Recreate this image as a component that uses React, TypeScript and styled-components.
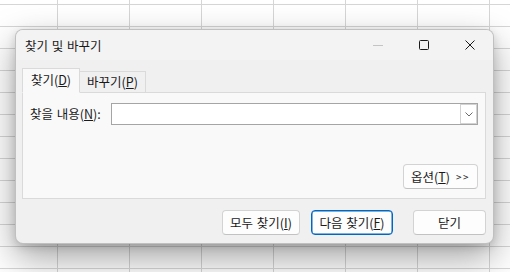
import React from "react";
import styled, { createGlobalStyle } from "styled-components";

const GlobalStyle = createGlobalStyle`
  html, body {
    margin: 0;
    padding: 0;
    background: #ffffff;
    overflow: hidden;
  }
  * {
    box-sizing: border-box;
  }
`;

const FONT = `"Noto Sans CJK KR", "Malgun Gothic", "Noto Sans", sans-serif`;

const Sheet = styled.div`
  width: 510px;
  height: 272px;
  overflow: hidden;
  padding: 29px 0 0 15px;
  background-color: #ffffff;
  background-image: linear-gradient(to right, #d6d6d6 1px, transparent 1px),
    linear-gradient(to bottom, #d6d6d6 1px, transparent 1px);
  background-size: 72px 22px;
  background-position: 57px 4px;
  font-family: ${FONT};
  font-size: 12.5px;
  word-spacing: 1px;
  color: #1a1a1a;
`;

const Dialog = styled.div`
  width: 479px;
  height: 215px;
  display: flex;
  flex-direction: column;
  background: #f0f0f0;
  border: 1px solid rgba(0, 0, 0, 0.2);
  border-radius: 8px;
  overflow: hidden;
  box-shadow: 0 14px 36px rgba(0, 0, 0, 0.36), 0 3px 10px rgba(0, 0, 0, 0.14);
`;

const TitleBar = styled.div`
  height: 30px;
  display: flex;
  align-items: center;
  background: #f3f3f3;
  padding-left: 9px;
`;

const Title = styled.div`
  flex: 1;
  line-height: 14px;
  padding-top: 1px;
`;

const CaptionButton = styled.div`
  width: 46px;
  height: 30px;
  display: flex;
  align-items: center;
  justify-content: center;
`;

const Body = styled.div`
  flex: 1;
  display: flex;
  flex-direction: column;
  padding: 8px 7px 0 6px;
`;

const TabRow = styled.div`
  display: flex;
  align-items: flex-end;
  height: 25px;
  margin-bottom: -1px;
  position: relative;
  z-index: 1;
`;

const Tab = styled.div<{ $active?: boolean }>`
  height: ${(p) => (p.$active ? "25px" : "22px")};
  display: flex;
  align-items: center;
  justify-content: center;
  padding: ${(p) => (p.$active ? "0 8px 1px 8px" : "0 7px")};
  background: ${(p) => (p.$active ? "#f9f9f9" : "#f0f0f0")};
  border: 1px solid #dadada;
  border-left-width: ${(p) => (p.$active ? "1px" : "0")};
  border-bottom-color: ${(p) => (p.$active ? "#f9f9f9" : "#dadada")};
  line-height: 14px;
`;

const Panel = styled.div`
  height: 107px;
  display: flex;
  flex-direction: column;
  background: #f9f9f9;
  border: 1px solid #dadada;
  padding: 10px 7px 9px 7px;
`;

const FieldRow = styled.div`
  display: flex;
  align-items: center;
`;

const Label = styled.label`
  width: 81px;
  line-height: 14px;
`;

const Combo = styled.div`
  flex: 1;
  height: 22px;
  display: flex;
  background: #ffffff;
  border: 1px solid #a5a5a5;
`;

const ComboInput = styled.input`
  flex: 1;
  min-width: 0;
  border: none;
  outline: none;
  background: transparent;
  font-family: ${FONT};
  font-size: 12px;
  padding: 0 4px;
`;

const DropButton = styled.div`
  width: 17px;
  height: 100%;
  display: flex;
  align-items: center;
  justify-content: center;
  border: 1px solid #d2d2d2;
  background: #ffffff;
`;

const Spacer = styled.div`
  flex: 1;
`;

const OptionsRow = styled.div`
  display: flex;
  justify-content: flex-end;
`;

const Footer = styled.div`
  display: flex;
  justify-content: flex-end;
  align-items: center;
  margin-top: 11px;
`;

const Button = styled.button<{ $width: number; $focused?: boolean; $gap?: number }>`
  width: ${(p) => p.$width}px;
  height: 25px;
  margin-left: ${(p) => p.$gap ?? 0}px;
  padding: 0;
  display: flex;
  align-items: center;
  justify-content: center;
  background: #fdfdfd;
  border: 1px solid ${(p) => (p.$focused ? "#0067c0" : "#d3d3d3")};
  border-bottom-color: ${(p) => (p.$focused ? "#0067c0" : "#c2c2c2")};
  box-shadow: ${(p) => (p.$focused ? "inset 0 0 0 0.5px #0067c0" : "none")};
  border-radius: 4px;
  font-family: ${FONT};
  font-size: 12.5px;
  word-spacing: 1px;
  line-height: 14px;
  color: #1a1a1a;
`;

const Key = styled.u`
  text-decoration: underline;
  text-underline-offset: 1px;
`;

const Arrows = styled.span`
  margin-left: 6px;
  font-size: 10px;
  letter-spacing: 1.5px;
`;

function MinimizeIcon() {
  return (
    <svg width="10" height="10" viewBox="0 0 10 10">
      <path d="M0 5.5 H10" stroke="#c4c4c4" strokeWidth="1" />
    </svg>
  );
}

function MaximizeIcon() {
  return (
    <svg width="10" height="10" viewBox="0 0 10 10">
      <rect x="0.5" y="0.5" width="9" height="9" rx="1" fill="none" stroke="#1a1a1a" strokeWidth="1" />
    </svg>
  );
}

function CloseIcon() {
  return (
    <svg width="10" height="10" viewBox="0 0 10 10">
      <path d="M0.5 0.5 L9.5 9.5 M9.5 0.5 L0.5 9.5" stroke="#1a1a1a" strokeWidth="1" />
    </svg>
  );
}

function ChevronIcon() {
  return (
    <svg width="8" height="5" viewBox="0 0 8 5">
      <path d="M0.5 0.5 L4 4 L7.5 0.5" fill="none" stroke="#6a6a6a" strokeWidth="1" />
    </svg>
  );
}

function App() {
  return (
    <Sheet>
      <GlobalStyle />
      <Dialog>
        <TitleBar>
          <Title>찾기 및 바꾸기</Title>
          <CaptionButton>
            <MinimizeIcon />
          </CaptionButton>
          <CaptionButton>
            <MaximizeIcon />
          </CaptionButton>
          <CaptionButton>
            <CloseIcon />
          </CaptionButton>
        </TitleBar>
        <Body>
          <TabRow>
            <Tab $active>
              찾기(<Key>D</Key>)
            </Tab>
            <Tab>
              바꾸기(<Key>P</Key>)
            </Tab>
          </TabRow>
          <Panel>
            <FieldRow>
              <Label htmlFor="find-what">
                찾을 내용(<Key>N</Key>):
              </Label>
              <Combo>
                <ComboInput id="find-what" />
                <DropButton>
                  <ChevronIcon />
                </DropButton>
              </Combo>
            </FieldRow>
            <Spacer />
            <OptionsRow>
              <Button $width={75}>
                옵션(<Key>T</Key>)<Arrows>&gt;&gt;</Arrows>
              </Button>
            </OptionsRow>
          </Panel>
          <Footer>
            <Button $width={78}>
              모두 찾기(<Key>I</Key>)
            </Button>
            <Button $width={82} $gap={11} $focused>
              다음 찾기(<Key>F</Key>)
            </Button>
            <Button $width={73} $gap={20}>
              닫기
            </Button>
          </Footer>
        </Body>
      </Dialog>
    </Sheet>
  );
}

export default App;
